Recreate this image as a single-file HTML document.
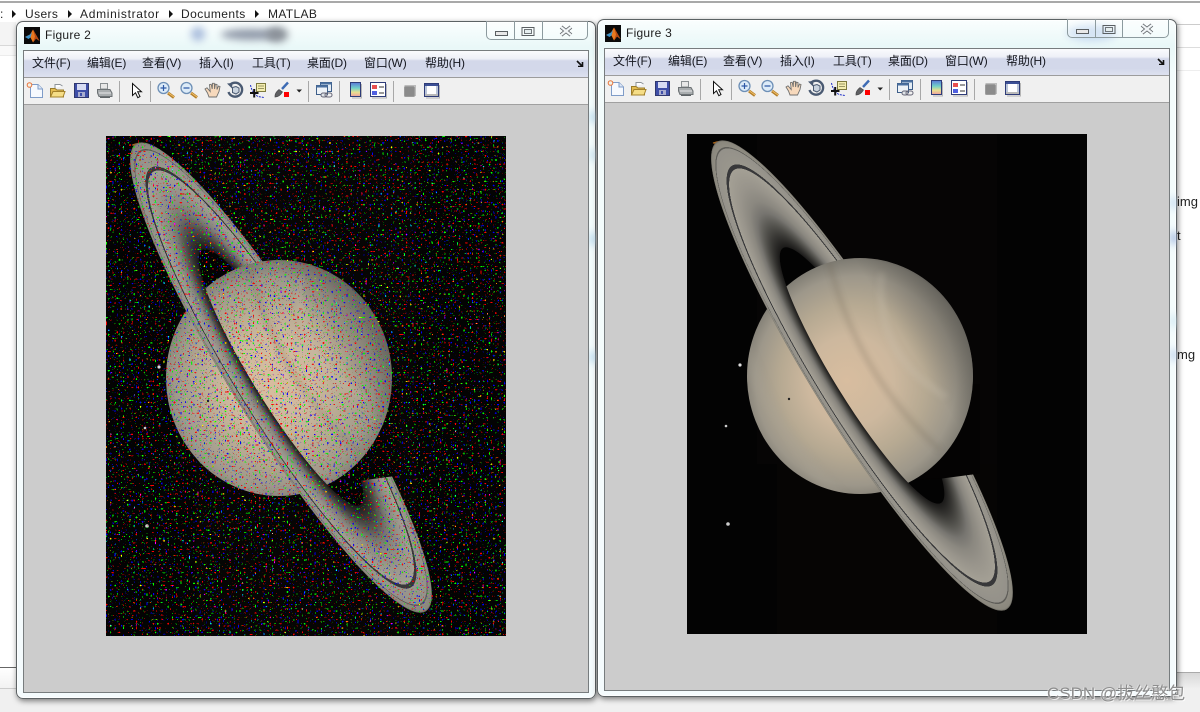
<!DOCTYPE html>
<html>
<head>
<meta charset="utf-8">
<style>
html,body{margin:0;padding:0;background:#fff}
body{width:1200px;height:712px;position:relative;overflow:hidden;font-family:"Liberation Sans","Noto Sans CJK SC",sans-serif;color:#1a1a1a}
.abs{position:absolute}
.crumb{position:absolute;top:7px;font-size:12px;line-height:15px;color:#222;white-space:nowrap}
.arrow{position:absolute;top:10px;width:0;height:0;border-left:4px solid #111;border-top:4px solid transparent;border-bottom:4px solid transparent}
.win{position:absolute;width:580px;height:678px;border-radius:7px;box-shadow:inset 0 0 0 1px #5c6264,inset 0 0 0 2px rgba(255,255,255,.8),1px 2px 6px rgba(0,0,0,.5);background:linear-gradient(180deg,#fbfefe 0,#e9f8f8 4%,#f3fcfc 8%,#f4fbfd 100%);overflow:hidden}
.spot{position:absolute;border-radius:50%;filter:blur(4px)}
.client{position:absolute;left:7px;top:29px;width:566px;height:643px;box-sizing:border-box;border:1px solid #777c7e;background:#ccc}
.menu{position:absolute;left:0;top:0;right:0;height:26px;background:linear-gradient(180deg,#fafbfd 0,#eef0f7 30%,#d3d8ea 38%,#d3d8ea 75%,#dde1ef 100%);border-bottom:1px solid #9c9c9c}
.tools{position:absolute;left:0;top:27px;right:0;height:26px;background:#f0f0f0;border-bottom:1px solid #a0a0a0}
.m{position:absolute;top:34px;font-size:12px;line-height:16px;color:#15171f;white-space:nowrap;letter-spacing:-.15px}
.title{position:absolute;left:29px;top:7px;font-size:12px;line-height:15px;letter-spacing:.25px;color:#1c1c1c}
.tb{position:absolute;left:0;top:57px}
.img{position:absolute;left:90px;top:115px;width:400px;height:500px;display:block}
.side{position:absolute;font-size:13px;line-height:16px;color:#222}
</style>
</head>
<body>
<svg width="0" height="0" style="position:absolute">
<defs>
<radialGradient id="pl" cx=".49" cy=".52" r=".54" fx=".44" fy=".52">
<stop offset="0" stop-color="#d8bd9f"/>
<stop offset=".35" stop-color="#cdb89e"/>
<stop offset=".6" stop-color="#b6a992"/>
<stop offset=".82" stop-color="#9d978a"/>
<stop offset=".95" stop-color="#7f7c73"/>
<stop offset="1" stop-color="#5e5c56"/>
</radialGradient>
<radialGradient id="rg" cx=".5" cy=".5" r=".5">
<stop offset=".545" stop-color="#1b1a19"/>
<stop offset=".59" stop-color="#363532"/>
<stop offset=".64" stop-color="#565550"/>
<stop offset=".69" stop-color="#777570"/>
<stop offset=".74" stop-color="#8b8880"/>
<stop offset=".8" stop-color="#98948b"/>
<stop offset=".88" stop-color="#a4a095"/>
<stop offset=".881" stop-color="#38383a"/>
<stop offset=".897" stop-color="#38383a"/>
<stop offset=".898" stop-color="#99968c"/>
<stop offset=".965" stop-color="#94918a"/>
<stop offset=".966" stop-color="#5f5e59"/>
<stop offset=".971" stop-color="#5f5e59"/>
<stop offset=".972" stop-color="#8f8c82"/>
<stop offset=".994" stop-color="#8a877d"/>
<stop offset="1" stop-color="#6a6860"/>
</radialGradient>
<linearGradient id="dim" x1="0" y1="0" x2="0" y2="1"><stop offset="0" stop-color="#4f4d48" stop-opacity=".6"/><stop offset="1" stop-color="#4f4d48" stop-opacity="0"/></linearGradient>
<linearGradient id="cb" x1="0" y1="0" x2="0" y2="1"><stop offset="0" stop-color="#5a78d8"/><stop offset=".4" stop-color="#70d0c8"/><stop offset=".7" stop-color="#e8e090"/><stop offset="1" stop-color="#f0a0a0"/></linearGradient>
<filter id="bl" x="-30%" y="-30%" width="160%" height="160%"><feGaussianBlur stdDeviation="3"/></filter>
<filter id="noise" x="0" y="0" width="100%" height="100%" color-interpolation-filters="sRGB">
<feTurbulence type="fractalNoise" baseFrequency=".47" numOctaves="1" seed="11"/>
<feColorMatrix type="matrix" values="1 0 0 0 0 0 1 0 0 0 0 0 1 0 0 0 0 0 0 1"/>
<feComponentTransfer>
<feFuncR type="linear" slope="40" intercept="-27.2"/>
<feFuncG type="linear" slope="40" intercept="-27.2"/>
<feFuncB type="linear" slope="40" intercept="-27.2"/>
</feComponentTransfer>
<feColorMatrix type="matrix" values="1 0 0 0 0 0 1 0 0 0 0 0 1 0 0 1 1 1 0 0"/>
</filter>
<clipPath id="plc"><ellipse cx="173" cy="242" rx="113" ry="118"/></clipPath>
<clipPath id="front"><path d="M-276 0A276 50 0 0 0 276 0L150 0A150 27 0 0 1-150 0Z"/></clipPath>
<g id="sat">
<rect width="400" height="500" fill="#030303"/>
<rect x="70" y="0" width="240" height="330" fill="#060505"/>
<rect x="90" y="330" width="220" height="170" fill="#060504"/>
<path d="M26 9Q36 5 48 11L36 10Z" fill="#a9651c" stroke="#a9651c"/>
<g transform="translate(175 241.500) rotate(58.200)">
<ellipse rx="275" ry="49.500" fill="url(#rg)"/>
<ellipse rx="150" ry="27" fill="#030303"/>
</g>
<polygon points="200,346 255,344.500 293,339.500 293,250 200,250" fill="#040303"/>
<ellipse cx="173" cy="242" rx="113" ry="118" fill="url(#pl)"/>
<g clip-path="url(#plc)">
<g transform="translate(175 241.500) rotate(58.200)" fill="none">
<path d="M-114-32Q-5 4 104-27" stroke="#6d6252" stroke-width="4" opacity=".3" filter="url(#bl)"/>
<path d="M-77-71Q-10-20 63-61" stroke="#cfc6b6" stroke-width="7" opacity=".22" filter="url(#bl)"/>
<path d="M-130 72Q0 118 130 72" stroke="#a9a394" stroke-width="14" opacity=".25" filter="url(#bl)"/>
<rect x="-130" y="-125" width="260" height="70" fill="url(#dim)"/>
</g>
</g>
<g transform="translate(175 241.500) rotate(58.200)" clip-path="url(#front)">
<ellipse rx="275" ry="49.500" fill="url(#rg)"/>
</g>
<circle cx="53" cy="231" r="1.600" fill="#ddd"/>
<circle cx="39" cy="292" r="1.300" fill="#ccc"/>
<circle cx="41" cy="390" r="1.800" fill="#ccc"/>
<circle cx="102" cy="265" r="1.200" fill="#222"/>
</g>
<g id="caption">
<rect x="495.500" y="31.500" width="12" height="4" fill="#e8e8e8" stroke="#5a5f62"/>
<rect x="522" y="27.500" width="12" height="8" fill="none" stroke="#5a5f62"/>
<rect x="524.500" y="29.500" width="7" height="4" fill="#e6eff0" stroke="#6f7579"/>
<path d="M561 27L571 35M571 27L561 35" stroke="#656a6e" stroke-width="4"/>
<path d="M561 27L571 35M571 27L561 35" stroke="#f2f6f8" stroke-width="2.200"/>
</g>
<g id="tb">
<path d="M30.500 84.500H38L42.500 89V97.500H30.500Z" fill="#f6f9fe" stroke="#7f9cc8"/>
<path d="M38 84.500V89H42.500" fill="#dfe8f6" stroke="#7f9cc8"/>
<circle cx="29.500" cy="85" r="2.300" fill="#f4f0e4" stroke="#e8743a"/>
<path d="M50.500 88.500H55L57 90H63.500V97H50.500Z" fill="#e4bd52" stroke="#9a7c2a"/>
<path d="M55 88V84.500H60L62.500 86" fill="#fff" stroke="#8d9399"/>
<path d="M50.500 97L53 91.500H65L63 97Z" fill="#f5dd86" stroke="#a4822c"/>
<rect x="74.500" y="83.500" width="14" height="14" fill="#3f4fa8" stroke="#30386f"/>
<rect x="77" y="84" width="9" height="6" fill="#d7dcf3"/>
<rect x="78" y="92" width="7" height="5" fill="#a9add0"/>
<rect x="80" y="93" width="2" height="3" fill="#3f4fa8"/>
<path d="M100.500 83.500H107.500V89H100.500Z" fill="#e8e8e8" stroke="#8a8f92"/>
<path d="M97.500 89.500H110L112 93V96.500H99L97.500 93Z" fill="#a9adaf" stroke="#6d7275"/>
<path d="M99 93H111" stroke="#e8e8e8"/>
<path d="M100 97.500H110" stroke="#5f6467"/>
<g stroke="#a8a8a8"><path d="M119.500 81V102M150.500 81V102M308.500 81V102M339.500 81V102M393.500 81V102"/></g>
<path d="M132.500 83.500V95.500L135.500 92.800L137.800 97.700L140 96.500L137.700 91.800H141.500Z" fill="#fff" stroke="#111"/>
<path d="M168 93L174 97.500" stroke="#b47f2a" stroke-width="3"/><path d="M168.500 93L174 97" stroke="#f1c06a"/>
<circle cx="163.500" cy="88" r="5.500" fill="#dcebf8" stroke="#6d8fb6" stroke-width="1.300"/>
<path d="M160.500 88H166.500M163.500 85V91" stroke="#2e59a6" stroke-width="1.200"/>
<path d="M191 93L197 97.500" stroke="#b47f2a" stroke-width="3"/><path d="M191.500 93L197 97" stroke="#f1c06a"/>
<circle cx="186.500" cy="88" r="5.500" fill="#dcebf8" stroke="#6d8fb6" stroke-width="1.300"/>
<path d="M183.500 88H189.500" stroke="#2e59a6" stroke-width="1.200"/>
<path d="M205 89L207.500 93L209 97H216.500L219 91.500L220 86.500L218.500 86L217 89.500L217 84.500L215.300 84.200L214.600 89L214.300 83.300L212.500 83.300L212.200 89L211.200 84.300L209.500 84.600L210.200 91.500L207 87.800Z" fill="#f7d9bc" stroke="#70706e" stroke-width=".9"/>
<path d="M229.500 85.500A7 7 0 1 1 228.500 92" fill="none" stroke="#4a5a72" stroke-width="2.400"/>
<path d="M227 83.500L232.500 83L232 88.500Z" fill="#4a5a72"/>
<path d="M232.500 87.500L236 86.500L239 88V92L236 94L232.500 92.500Z" fill="#c9d3de" stroke="#4a5a72"/>
<rect x="256.500" y="83.500" width="9" height="8" fill="#f4eeb0" stroke="#7d7a3e"/>
<path d="M258 86H264M258 88.500H264" stroke="#9a9764"/>
<path d="M250.500 85Q252 93 258 96.500L264 97.500" fill="none" stroke="#2030c8" stroke-dasharray="2 1"/>
<path d="M250 93H258.500M254.200 89V97.500" stroke="#111" stroke-width="2"/>
<path d="M282 89L288 82.500" stroke="#3d6bb4" stroke-width="2.400"/>
<path d="M275 97Q274.500 93 279 89.500L282.500 92Q279.500 97 275 97Z" fill="#5f6063" stroke="#47484a" stroke-width=".7"/>
<rect x="284" y="92" width="5" height="5" fill="#f00"/>
<path d="M296.500 89.500H302L299.200 92.500Z" fill="#222"/>
<rect x="320.500" y="82.500" width="11" height="9" fill="#e3ecf4" stroke="#3e5f8a"/>
<rect x="320.500" y="82.500" width="11" height="2" fill="#4a70a0"/>
<rect x="316.500" y="85.500" width="11" height="9" fill="#edf2f7" stroke="#3e5f8a"/>
<rect x="316.500" y="85.500" width="11" height="2" fill="#4a70a0"/>
<rect x="321" y="93" width="6" height="4" rx="2" fill="#dfe4e8" stroke="#667"/>
<rect x="325" y="93" width="7" height="4" rx="2" fill="none" stroke="#667"/>
<rect x="350.500" y="82.500" width="10" height="14" fill="url(#cb)" stroke="#2e3c78"/>
<path d="M361.500 84V98H352" stroke="#b5b5b5" fill="none"/>
<rect x="370.500" y="82.500" width="15" height="14" fill="#fff" stroke="#2e3c78"/>
<rect x="372" y="85" width="5" height="4" fill="#e85050"/>
<rect x="372" y="91" width="5" height="4" fill="#5060e0"/>
<path d="M379 87H384M379 93H384" stroke="#333"/>
<path d="M386.500 84V98H372" stroke="#b5b5b5" fill="none"/>
<rect x="404.500" y="86.500" width="10" height="10" rx="1" fill="#8b8b8b" stroke="#9c9c9c"/>
<path d="M404.500 85.500H415.500V96" stroke="#bcbcbc" fill="none"/>
<rect x="424.500" y="83.500" width="14" height="13" fill="#fff" stroke="#2e3c78"/>
<rect x="425" y="84" width="13" height="2" fill="#3c5096"/>
<rect x="425" y="94" width="13" height="2" fill="#b9b9b9"/>
<rect x="425" y="86" width="2" height="8" fill="#b9c4d8"/>
<rect x="436" y="86" width="2" height="8" fill="#b9c4d8"/>
<path d="M439.500 85V98H426" stroke="#b5b5b5" fill="none"/>
</g>
<g id="logo">
<rect width="16" height="17" fill="#0a0a0a"/>
<path d="M1 10L6 7.500L9 2.500L13 9.500L15.500 14L12 11.500L9 15.500L6.500 10.500Z" fill="#e8781e"/>
<path d="M1 10L6 7.500L8 5L6.500 10.500L4.500 12Z" fill="#3c93c9"/>
<path d="M9 2.500L11 9.500L9 15.500L12 11.500L15.500 14L13 9.500Z" fill="#b84a12"/>
</g>
</defs>
</svg>

<div class="abs" style="left:0;top:1px;width:1200px;height:2px;background:#a9a9a9"></div>
<div class="crumb" style="left:0">:</div>
<div class="arrow" style="left:12px"></div>
<div class="crumb" style="left:25px;letter-spacing:.4px">Users</div>
<div class="arrow" style="left:68px"></div>
<div class="crumb" style="left:80px;letter-spacing:.7px">Administrator</div>
<div class="arrow" style="left:169px"></div>
<div class="crumb" style="left:181px;letter-spacing:.45px">Documents</div>
<div class="arrow" style="left:255px"></div>
<div class="crumb" style="left:268px;letter-spacing:.35px">MATLAB</div>

<div class="abs" style="left:0;top:22px;width:16px;height:23px;background:#f4f4f4;border-bottom:1px solid #d8d8d8"></div>
<div class="abs" style="left:0;top:46px;width:16px;height:9px;background:#f9f9f9;border-bottom:1px solid #ececec"></div>
<div class="abs" style="left:0;top:667px;width:18px;height:1px;background:#666"></div>
<div class="abs" style="left:0;top:668px;width:18px;height:20px;background:linear-gradient(180deg,#fff,#f2f2f2);border-bottom:1px solid #ccc"></div>
<div class="abs" style="left:0;top:689px;width:1200px;height:23px;background:#f0f0f0"></div>
<div class="abs" style="left:1176px;top:24px;width:24px;height:1px;background:#ccc"></div>
<div class="abs" style="left:1176px;top:47px;width:24px;height:1px;background:#ddd"></div>
<div class="abs" style="left:1176px;top:70px;width:24px;height:1px;background:#eee"></div>
<div class="abs" style="left:1176px;top:672px;width:24px;height:1px;background:#aaa"></div>
<div class="abs" style="left:1176px;top:673px;width:24px;height:16px;background:linear-gradient(180deg,#d8d8d8,#f0f0f0)"></div>
<div class="side" style="left:1177px;top:194px">img</div>
<div class="side" style="left:1177px;top:228px">t</div>
<div class="side" style="left:1177px;top:347px">mg</div>

<div class="win" style="left:16px;top:21px">
<div class="spot" style="left:175px;top:6px;width:14px;height:14px;background:#a9bcdc"></div>
<div class="spot" style="left:205px;top:8px;width:60px;height:11px;background:#8f98a8"></div>
<div class="spot" style="left:250px;top:6px;width:22px;height:15px;background:#8a9098"></div>
<div class="spot" style="left:574px;top:90px;width:6px;height:12px;background:#a8cfe8"></div>
<div class="spot" style="left:574px;top:128px;width:6px;height:12px;background:#b8d8ea"></div>
<div class="spot" style="left:574px;top:211px;width:6px;height:14px;background:#a8cfe8"></div>
<div class="spot" style="left:574px;top:330px;width:6px;height:12px;background:#a8cfe8"></div>
<svg class="abs" style="left:8px;top:6px" width="16" height="17"><use href="#logo"/></svg>
<div class="title">Figure 2</div>
<div class="abs" style="left:470px;top:-1px;width:102px;height:20px;box-sizing:border-box;border:1px solid #8c9a9e;border-radius:0 0 5px 5px;background:rgba(255,255,255,.25)">
<div class="abs" style="left:27px;top:0;width:1px;height:19px;background:#8c9a9e"></div>
<div class="abs" style="left:55px;top:0;width:1px;height:19px;background:#8c9a9e"></div>
</div>
<svg class="abs" style="left:0;top:0" width="580" height="25" viewBox="16 21 580 25"><use href="#caption"/></svg>
<div class="client"><div class="menu"></div><div class="tools"></div></div>
<div class="m" style="left:16px">文件(F)</div>
<div class="m" style="left:71px">编辑(E)</div>
<div class="m" style="left:126px">查看(V)</div>
<div class="m" style="left:183px">插入(I)</div>
<div class="m" style="left:236px">工具(T)</div>
<div class="m" style="left:291px">桌面(D)</div>
<div class="m" style="left:348px">窗口(W)</div>
<div class="m" style="left:409px">帮助(H)</div>
<svg class="abs" style="left:560px;top:39px" width="8" height="7"><path d="M1 1L6 6M6.500 2V6.500H2" fill="none" stroke="#111" stroke-width="1.600"/></svg>
<svg class="tb" width="580" height="27" viewBox="16 78 580 27"><use href="#tb"/></svg>
<svg class="img" viewBox="0 0 400 500"><use href="#sat"/><rect width="400" height="500" filter="url(#noise)"/></svg>
</div>

<div class="win" style="left:597px;top:19px">
<div class="spot" style="left:470px;top:6px;width:50px;height:16px;background:#c6daf0"></div>
<div class="spot" style="left:574px;top:178px;width:6px;height:12px;background:#b8d2ec"></div>
<div class="spot" style="left:574px;top:212px;width:6px;height:14px;background:#8ea8d8"></div>
<div class="spot" style="left:574px;top:295px;width:6px;height:14px;background:#c8e4f0"></div>
<div class="spot" style="left:574px;top:330px;width:6px;height:12px;background:#b0c8e8"></div>
<svg class="abs" style="left:8px;top:6px" width="16" height="17"><use href="#logo"/></svg>
<div class="title">Figure 3</div>
<div class="abs" style="left:470px;top:-1px;width:102px;height:20px;box-sizing:border-box;border:1px solid #8c9a9e;border-radius:0 0 5px 5px;background:rgba(255,255,255,.25)">
<div class="abs" style="left:27px;top:0;width:1px;height:19px;background:#8c9a9e"></div>
<div class="abs" style="left:54px;top:0;width:1px;height:19px;background:#8c9a9e"></div>
</div>
<svg class="abs" style="left:0;top:0" width="580" height="25" viewBox="16 21 580 25"><use href="#caption"/></svg>
<div class="client"><div class="menu"></div><div class="tools"></div></div>
<div class="m" style="left:16px">文件(F)</div>
<div class="m" style="left:71px">编辑(E)</div>
<div class="m" style="left:126px">查看(V)</div>
<div class="m" style="left:183px">插入(I)</div>
<div class="m" style="left:236px">工具(T)</div>
<div class="m" style="left:291px">桌面(D)</div>
<div class="m" style="left:348px">窗口(W)</div>
<div class="m" style="left:409px">帮助(H)</div>
<svg class="abs" style="left:560px;top:39px" width="8" height="7"><path d="M1 1L6 6M6.500 2V6.500H2" fill="none" stroke="#111" stroke-width="1.600"/></svg>
<svg class="tb" width="580" height="27" viewBox="16 78 580 27"><use href="#tb"/></svg>
<svg class="img" viewBox="0 0 400 500"><use href="#sat"/></svg>
</div>

<div class="abs" style="left:1047px;top:684px;font-size:17px;line-height:20px;color:#8e8e8e;white-space:nowrap;text-shadow:1px 1px 0 rgba(255,255,255,.7),-1px 0 0 rgba(255,255,255,.4)">CSDN @拔丝憨包</div>
</body>
</html>
